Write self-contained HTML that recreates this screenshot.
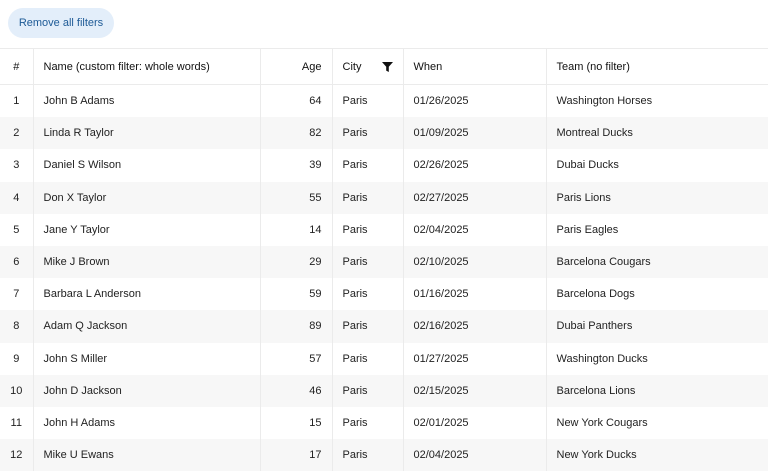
<!DOCTYPE html>
<html><head><style>
body{margin:0;background:#fff;font-family:"Liberation Sans",sans-serif;color:#222;font-size:11px;width:768px;height:465px;overflow:hidden;position:relative}
.btn{position:absolute;left:8px;top:8px;width:106px;height:30px;border-radius:15px;background:#e3eefa;color:#1d5a96;font-size:11px;line-height:30px;text-align:center}
table{position:absolute;left:0;top:48px;width:768px;border-collapse:collapse;table-layout:fixed}
th,td{border-right:1px solid #ebebeb;padding:0 10px;white-space:nowrap;overflow:hidden}
th{height:35px;border-top:1px solid #ebebeb;border-bottom:1px solid #ebebeb;text-align:left;font-weight:normal;color:#111}
td{height:32.2px}
tr:nth-child(odd) td{background:#f7f7f7}
tr td:first-child, tr th:first-child{text-align:center;padding:0 4px}
.r{text-align:right}
th:last-child,td:last-child{border-right:none}
.f{float:right;margin-top:1px}
</style></head><body>
<div class="btn">Remove all filters</div>
<table>
<colgroup><col style="width:33px"><col style="width:227px"><col style="width:72px"><col style="width:71px"><col style="width:143px"><col></colgroup>
<tr><th>#</th><th>Name (custom filter: whole words)</th><th class="r">Age</th><th>City<svg class="f" width="11" height="10" viewBox="0 0 11 10"><path d="M0 0H11L6.8 4.8V10L4.2 8.6V4.8Z" fill="#111"/></svg></th><th>When</th><th>Team (no filter)</th></tr>
<tr><td>1</td><td>John B Adams</td><td class="r">64</td><td>Paris</td><td>01/26/2025</td><td>Washington Horses</td></tr>
<tr><td>2</td><td>Linda R Taylor</td><td class="r">82</td><td>Paris</td><td>01/09/2025</td><td>Montreal Ducks</td></tr>
<tr><td>3</td><td>Daniel S Wilson</td><td class="r">39</td><td>Paris</td><td>02/26/2025</td><td>Dubai Ducks</td></tr>
<tr><td>4</td><td>Don X Taylor</td><td class="r">55</td><td>Paris</td><td>02/27/2025</td><td>Paris Lions</td></tr>
<tr><td>5</td><td>Jane Y Taylor</td><td class="r">14</td><td>Paris</td><td>02/04/2025</td><td>Paris Eagles</td></tr>
<tr><td>6</td><td>Mike J Brown</td><td class="r">29</td><td>Paris</td><td>02/10/2025</td><td>Barcelona Cougars</td></tr>
<tr><td>7</td><td>Barbara L Anderson</td><td class="r">59</td><td>Paris</td><td>01/16/2025</td><td>Barcelona Dogs</td></tr>
<tr><td>8</td><td>Adam Q Jackson</td><td class="r">89</td><td>Paris</td><td>02/16/2025</td><td>Dubai Panthers</td></tr>
<tr><td>9</td><td>John S Miller</td><td class="r">57</td><td>Paris</td><td>01/27/2025</td><td>Washington Ducks</td></tr>
<tr><td>10</td><td>John D Jackson</td><td class="r">46</td><td>Paris</td><td>02/15/2025</td><td>Barcelona Lions</td></tr>
<tr><td>11</td><td>John H Adams</td><td class="r">15</td><td>Paris</td><td>02/01/2025</td><td>New York Cougars</td></tr>
<tr><td>12</td><td>Mike U Ewans</td><td class="r">17</td><td>Paris</td><td>02/04/2025</td><td>New York Ducks</td></tr>
</table>
</body></html>
